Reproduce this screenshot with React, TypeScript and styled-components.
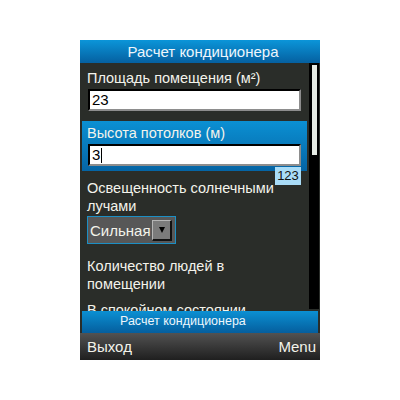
import { ReactElement } from 'react';
import styled, { createGlobalStyle } from 'styled-components';

const GlobalStyle = createGlobalStyle`
  body {
    margin: 0;
    background: #fff;
    font-family: 'Liberation Sans', Arial, sans-serif;
  }
`;

const Page = styled.div`
  width: 400px;
  height: 400px;
  box-sizing: border-box;
  padding-top: 40px;
  display: flex;
  justify-content: center;
`;

const Screen = styled.div`
  width: 240px;
  height: 320px;
  display: flex;
  flex-direction: column;
  background: #2a2d29;
  color: #f3f3eb;
  font-size: 15px;
`;

const TitleBar = styled.div`
  height: 23px;
  line-height: 23px;
  padding-left: 6px;
  text-align: center;
  color: #eef6fc;
  background: linear-gradient(#0b95d9, #0560a0);
`;

const Body = styled.div`
  height: 248px;
  display: flex;
  overflow: hidden;
`;

const Form = styled.div`
  flex: 1;
  min-width: 0;
  display: flex;
  flex-direction: column;
  gap: 5px;
  padding-top: 3px;
`;

const Item = styled.div<{ $active?: boolean; $flush?: boolean }>`
  position: relative;
  flex-shrink: 0;
  margin: 0 2px;
  padding: 3px 6px ${(p) => (p.$flush ? 0 : 5)}px 5px;
  background: ${(p) => (p.$active ? 'linear-gradient(#0b90d3, #0564a4)' : 'transparent')};
`;

const Label = styled.div`
  font-size: 14.5px;
  line-height: 18px;
  white-space: nowrap;
`;

const Field = styled.div`
  height: 22px;
  box-sizing: border-box;
  margin: 2px 0 0 1px;
  padding-left: 2px;
  display: flex;
  align-items: center;
  background: #fff;
  color: #000;
  border: 2px solid #000;
  border-right-color: #8d8d8d;
  border-bottom-color: #8d8d8d;
  line-height: 18px;
`;

const Caret = styled.span`
  width: 1px;
  height: 15px;
  margin-left: 1px;
  background: #000;
`;

const Badge = styled.div`
  position: absolute;
  z-index: 1;
  right: 6px;
  top: calc(100% - 4px);
  width: 26px;
  height: 18px;
  line-height: 18px;
  text-align: center;
  font-size: 13px;
  color: #111;
  background: #a9dcf7;
`;

const Select = styled.div`
  width: 89px;
  height: 28px;
  box-sizing: border-box;
  margin-top: 1px;
  padding: 0 3px 0 2px;
  display: flex;
  align-items: center;
  justify-content: space-between;
  border: 1px solid #1c8fc4;
  background: #575757;
  color: #f3f3eb;
`;

const SelectButton = styled.div`
  width: 20px;
  height: 21px;
  box-sizing: border-box;
  display: flex;
  align-items: center;
  justify-content: center;
  background: #7b7b7b;
  border: 1px solid;
  border-width: 1px 2px 2px 1px;
  border-color: #b5b5b5 #111 #111 #b5b5b5;
`;

const Triangle = styled.span`
  width: 0;
  height: 0;
  border-left: 3px solid transparent;
  border-right: 3px solid transparent;
  border-top: 6px solid #000;
`;

const ScrollTrack = styled.div`
  width: 10px;
  box-sizing: border-box;
  margin: 0 1px 2px 0;
  padding: 2px 2px 0 3px;
  background: #000;
`;

const ScrollThumb = styled.div`
  height: 90px;
  background: #e6ebe4;
`;

const CommandWrap = styled.div`
  height: 22px;
  padding: 0 2px;
`;

const CommandBar = styled.div`
  height: 100%;
  padding-left: 38px;
  line-height: 21px;
  font-size: 12.5px;
  color: #eef6fc;
  background: linear-gradient(#0b90d3, #055e9d);
`;

const SoftKeys = styled.div`
  height: 27px;
  line-height: 27px;
  padding: 0 4px 0 7px;
  display: flex;
  justify-content: space-between;
  color: #f3f3eb;
  background: linear-gradient(#525252, #1f1f1f);
`;

const App = (): ReactElement => {
  return (
    <Page>
      <GlobalStyle />
      <Screen>
        <TitleBar>Расчет кондиционера</TitleBar>

        <Body>
          <Form>
            <Item>
              <Label>Площадь помещения (м²)</Label>
              <Field>23</Field>
            </Item>

            <Item $active>
              <Label>Высота потолков (м)</Label>
              <Field>
                3<Caret />
              </Field>
              <Badge>123</Badge>
            </Item>

            <Item>
              <Label>
                Освещенность солнечными
                <br />
                лучами
              </Label>
              <Select>
                Сильная
                <SelectButton>
                  <Triangle />
                </SelectButton>
              </Select>
            </Item>

            <Item $flush>
              <Label>
                Количество людей в
                <br />
                помещении
              </Label>
            </Item>

            <Item $flush>
              <Label>В спокойном состоянии</Label>
            </Item>
          </Form>

          <ScrollTrack>
            <ScrollThumb />
          </ScrollTrack>
        </Body>

        <CommandWrap>
          <CommandBar>Расчет кондиционера</CommandBar>
        </CommandWrap>

        <SoftKeys>
          <span>Выход</span>
          <span>Menu</span>
        </SoftKeys>
      </Screen>
    </Page>
  );
};

export default App;
